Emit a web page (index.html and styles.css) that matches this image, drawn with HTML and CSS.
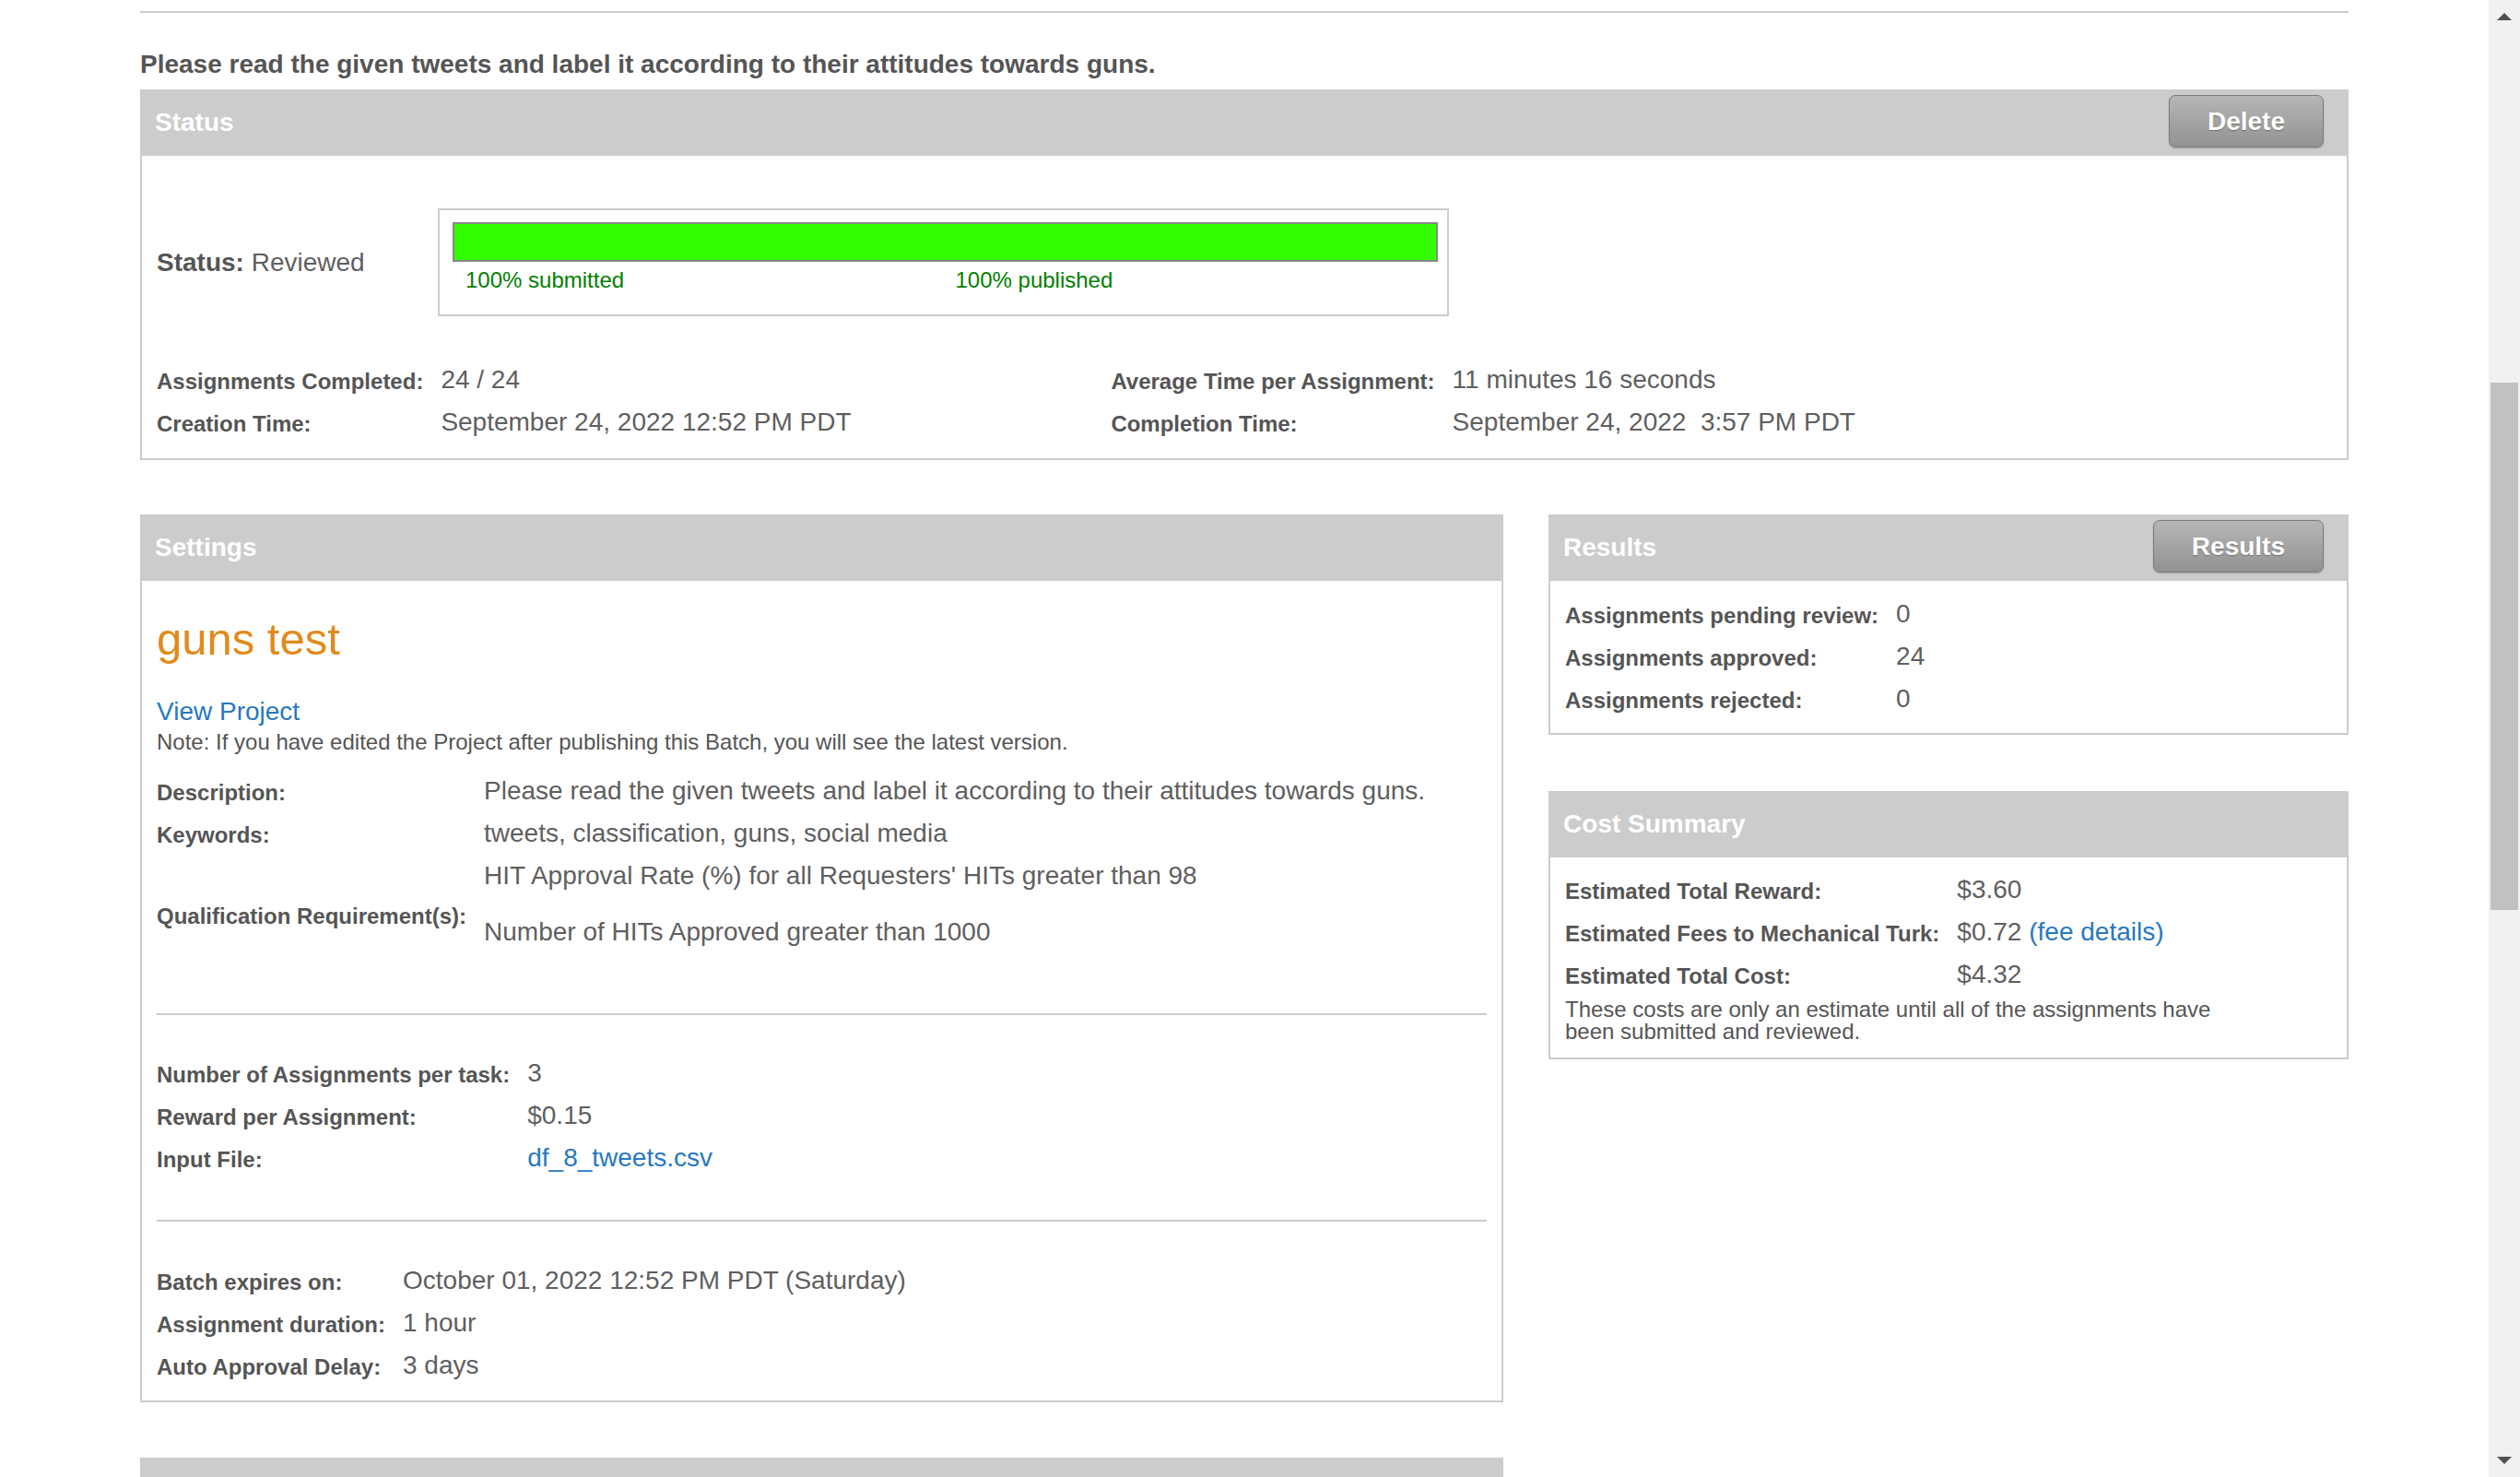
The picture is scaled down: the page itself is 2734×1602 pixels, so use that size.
FILE: index.html
```html
<!DOCTYPE html>
<html lang="en">
<head>
<meta charset="utf-8">
<title>Batch Details</title>
<link rel="stylesheet" href="styles.css">
</head>
<body>
<div class="page">
  <main class="main">
    <div class="container">
      <div class="rule"></div>
      <h1 class="title">Please read the given tweets and label it according to their attitudes towards guns.</h1>

      <section class="panel">
        <div class="panel-head">
          <h3>Status</h3>
          <button class="btn">Delete</button>
        </div>
        <div class="panel-body status-body">
          <div class="status-row">
            <div class="status-label"><b>Status:</b> Reviewed</div>
            <div class="progress">
              <div class="bar"></div>
              <div class="bar-labels">
                <span class="bl-first">100% submitted</span>
                <span class="bl-second">100% published</span>
              </div>
            </div>
          </div>
          <div class="stats">
            <div class="k">Assignments Completed:</div>
            <div class="v">24 / 24</div>
            <div class="k">Average Time per Assignment:</div>
            <div class="v">11 minutes 16 seconds</div>
            <div class="k">Creation Time:</div>
            <div class="v">September 24, 2022 12:52 PM PDT</div>
            <div class="k">Completion Time:</div>
            <div class="v">September 24, 2022&nbsp; 3:57 PM PDT</div>
          </div>
        </div>
      </section>

      <div class="columns">
        <div class="col-left">
          <section class="panel">
            <div class="panel-head">
              <h3>Settings</h3>
            </div>
            <div class="panel-body settings-body">
              <h2 class="project-name">guns test</h2>
              <a class="link view-project" href="#">View Project</a>
              <p class="note">Note: If you have edited the Project after publishing this Batch, you will see the latest version.</p>

              <div class="kv kv-first">
                <div class="k">Description:</div>
                <div class="v">Please read the given tweets and label it according to their attitudes towards guns.</div>
                <div class="k">Keywords:</div>
                <div class="v">tweets, classification, guns, social media</div>
                <div class="k k-middle">Qualification Requirement(s):</div>
                <div class="v v-quals">
                  <div>HIT Approval Rate (%) for all Requesters' HITs greater than 98</div>
                  <div class="qual-second">Number of HITs Approved greater than 1000</div>
                </div>
              </div>

              <div class="divider"></div>

              <div class="kv kv-group">
                <div class="k">Number of Assignments per task:</div>
                <div class="v">3</div>
                <div class="k">Reward per Assignment:</div>
                <div class="v">$0.15</div>
                <div class="k">Input File:</div>
                <div class="v"><a class="link" href="#">df_8_tweets.csv</a></div>
              </div>

              <div class="divider divider-second"></div>

              <div class="kv kv-group">
                <div class="k">Batch expires on:</div>
                <div class="v">October 01, 2022 12:52 PM PDT (Saturday)</div>
                <div class="k">Assignment duration:</div>
                <div class="v">1 hour</div>
                <div class="k">Auto Approval Delay:</div>
                <div class="v">3 days</div>
              </div>
            </div>
          </section>

          <section class="panel panel-next">
            <div class="panel-head"></div>
          </section>
        </div>

        <div class="col-right">
          <section class="panel">
            <div class="panel-head">
              <h3>Results</h3>
              <button class="btn">Results</button>
            </div>
            <div class="panel-body results-body">
              <div class="kv">
                <div class="k">Assignments pending review:</div>
                <div class="v">0</div>
                <div class="k">Assignments approved:</div>
                <div class="v">24</div>
                <div class="k">Assignments rejected:</div>
                <div class="v">0</div>
              </div>
            </div>
          </section>

          <section class="panel panel-cost">
            <div class="panel-head">
              <h3>Cost Summary</h3>
            </div>
            <div class="panel-body cost-body">
              <div class="kv">
                <div class="k">Estimated Total Reward:</div>
                <div class="v">$3.60</div>
                <div class="k">Estimated Fees to Mechanical Turk:</div>
                <div class="v">$0.72 <a class="link" href="#">(fee details)</a></div>
                <div class="k">Estimated Total Cost:</div>
                <div class="v">$4.32</div>
              </div>
              <p class="cost-note">These costs are only an estimate until all of the assignments have been submitted and reviewed.</p>
            </div>
          </section>
        </div>
      </div>
    </div>
  </main>

  <div class="scrollbar" aria-hidden="true">
    <div class="arrow-up"></div>
    <div class="thumb"></div>
    <div class="arrow-down"></div>
  </div>
</div>
</body>
</html>
```

FILE: styles.css
```css
html, body {
  margin: 0;
  padding: 0;
  background: #ffffff;
}

body {
  font-family: "Liberation Sans", Arial, Helvetica, sans-serif;
  color: #5f5f5f;
  overflow: hidden;
}

.page {
  display: flex;
  width: 2734px;
  height: 1602px;
  overflow: hidden;
}

.main {
  flex: 1;
  overflow: hidden;
}

.container {
  width: 2396px;
  margin: 0 auto;
  padding-top: 12px;
}

.rule {
  height: 2px;
  background: #cccccc;
}

.title {
  margin: 40px 0 11px;
  font-size: 28px;
  line-height: 32px;
  font-weight: bold;
  color: #555555;
}

/* Panels */
.panel-head {
  height: 72px;
  background: #cccccc;
  display: flex;
  justify-content: space-between;
  align-items: flex-start;
  padding: 0 27px 0 16px;
}

.panel-head h3 {
  margin: 0;
  font-size: 28px;
  line-height: 72px;
  font-weight: bold;
  color: #ffffff;
}

.btn {
  margin-top: 6px;
  height: 57px;
  padding: 0 41px;
  border: 1px solid #7b7b7b;
  border-radius: 7px;
  background: linear-gradient(#b6b6b6, #929292);
  color: #ffffff;
  font-family: "Liberation Sans", Arial, sans-serif;
  font-size: 28px;
  font-weight: bold;
  line-height: 55px;
  text-shadow: 0 1px 1px rgba(0, 0, 0, 0.3);
  box-shadow: 0 1px 2px rgba(0, 0, 0, 0.2);
}

.panel-body {
  border: 2px solid #cccccc;
  border-top: 0;
  padding: 0 16px;
}

/* Status */
.status-body {
  padding-top: 57px;
  padding-bottom: 16px;
}

.status-row {
  display: flex;
  align-items: center;
}

.status-label {
  width: 305px;
  font-size: 28px;
  line-height: 32px;
  color: #5f5f5f;
}

.status-label b {
  color: #555555;
}

.progress {
  width: 1097px;
  box-sizing: border-box;
  border: 2px solid #cccccc;
  padding: 13px 10px 23px 14px;
}

.bar {
  height: 43px;
  box-sizing: border-box;
  border: 2px solid #888888;
  background: #33ff00;
}

.bar-labels {
  display: grid;
  grid-template-columns: 1fr 1fr;
  margin-top: 6px;
  font-size: 24px;
  line-height: 28px;
  color: #008000;
}

.bl-first {
  padding-left: 14px;
}

.bl-second {
  padding-left: 11px;
}

.stats {
  display: grid;
  grid-template-columns: max-content 708px max-content 1fr;
  column-gap: 19px;
  margin-top: 46px;
}

/* key/value rows */
.k {
  font-size: 24px;
  font-weight: bold;
  line-height: 43px;
  padding-top: 3px;
  color: #555555;
  white-space: nowrap;
}

.v {
  font-size: 28px;
  line-height: 46px;
  color: #5f5f5f;
}

.kv {
  display: grid;
  grid-template-columns: max-content 1fr;
  column-gap: 19px;
}

/* Settings */
.settings-body {
  padding-top: 35px;
  padding-bottom: 15px;
}

.project-name {
  margin: 0;
  font-size: 49px;
  line-height: 56px;
  font-weight: normal;
  color: #e08b1c;
}

.link {
  color: #2878c0;
  text-decoration: none;
}

.view-project {
  display: block;
  margin-top: 35px;
  font-size: 28px;
  line-height: 32px;
}

.note {
  margin: 5px 0 0;
  font-size: 24px;
  line-height: 24px;
  color: #555555;
}

.kv-first {
  margin-top: 18px;
}

.k-middle {
  align-self: center;
}

.v-quals {
  padding-bottom: 22px;
}

.qual-second {
  margin-top: 15px;
}

.divider {
  height: 2px;
  background: #cccccc;
  margin-top: 43px;
}

.divider-second {
  margin-top: 44px;
}

.kv-group {
  margin-top: 40px;
}

.kv-group + .divider {
  margin-top: 44px;
}

.divider-second + .kv-group {
  margin-top: 41px;
}

.columns {
  display: flex;
  gap: 49px;
  margin-top: 59px;
}

.col-left {
  width: 1479px;
  flex: none;
}

.col-right {
  flex: 1;
  min-width: 0;
}

.panel-next {
  margin-top: 60px;
}

/* Results & cost */
.results-body {
  padding-top: 13px;
  padding-bottom: 14px;
}

.panel-cost {
  margin-top: 61px;
}

.cost-body {
  padding-top: 12px;
  padding-bottom: 16px;
}

.cost-note {
  margin: 3px 0 0;
  width: 735px;
  font-size: 24px;
  line-height: 24px;
  color: #555555;
}

/* Scrollbar */
.scrollbar {
  width: 34px;
  flex: none;
  background: #f1f1f1;
  display: flex;
  flex-direction: column;
  align-items: center;
}

.arrow-up {
  margin-top: 14px;
  width: 0;
  height: 0;
  border-left: 8px solid transparent;
  border-right: 8px solid transparent;
  border-bottom: 8px solid #505050;
}

.thumb {
  margin-top: 393px;
  width: 30px;
  height: 572px;
  background: #c1c1c1;
}

.arrow-down {
  margin-top: auto;
  margin-bottom: 14px;
  width: 0;
  height: 0;
  border-left: 8px solid transparent;
  border-right: 8px solid transparent;
  border-top: 8px solid #505050;
}
```
